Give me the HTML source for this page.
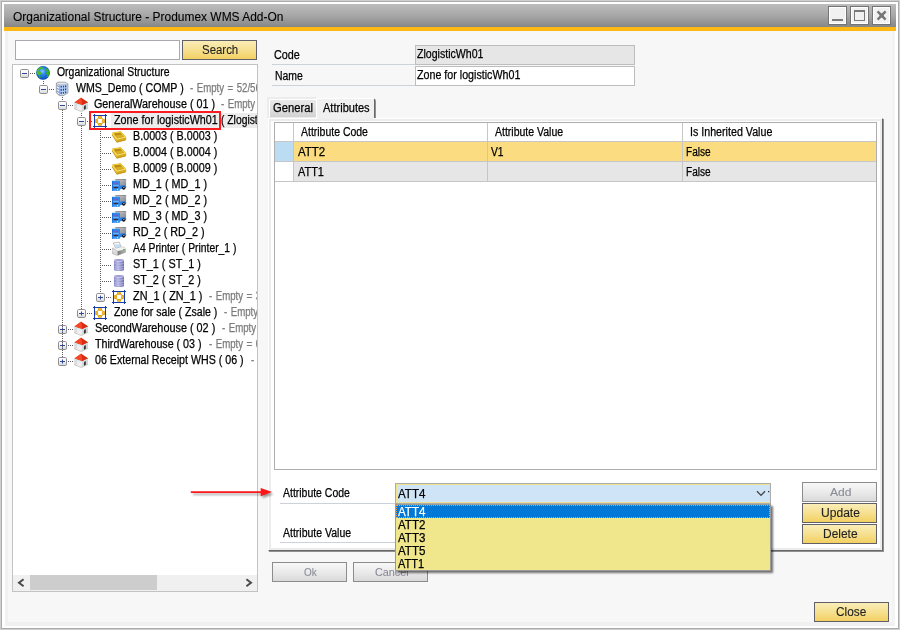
<!DOCTYPE html>
<html><head><meta charset="utf-8"><title>Organizational Structure - Produmex WMS Add-On</title>
<style>
html,body{margin:0;padding:0}
body{width:900px;height:630px;overflow:hidden;position:relative;background:#cfcfcf;font-family:'Liberation Sans', sans-serif;font-size:11px}
span{-webkit-text-stroke:0.25px currentColor}
span.u{-webkit-text-stroke:0.1px currentColor}
</style></head><body>
<div style="position:absolute;left:1px;top:1px;width:898px;height:628px;background:#acacac"></div>
<div style="position:absolute;left:2px;top:2px;width:896px;height:626px;background:#fff"></div>
<div style="position:absolute;left:4px;top:4px;width:892px;height:23px;background:linear-gradient(#bdbdbd,#a7a7a7 50%,#868686)"></div>
<div style="position:absolute;left:4px;top:27px;width:892px;height:4px;background:#fdb813"></div>
<div style="position:absolute;left:5px;top:31px;width:890px;height:595px;background:#f7f7f7;box-sizing:border-box;border-left:3px solid #f1f1f1;border-right:3px solid #f3f3f3;border-bottom:4px solid #f0f0f0"></div>
<div style="position:absolute;left:828px;top:6px;width:19px;height:19px;box-sizing:border-box;border:1px solid #747474;background:#f1f1f1;box-shadow:inset 0 0 0 1px #fff"></div>
<div style="position:absolute;left:850px;top:6px;width:19px;height:19px;box-sizing:border-box;border:1px solid #747474;background:#f1f1f1;box-shadow:inset 0 0 0 1px #fff"></div>
<div style="position:absolute;left:872px;top:6px;width:19px;height:19px;box-sizing:border-box;border:1px solid #747474;background:#f1f1f1;box-shadow:inset 0 0 0 1px #fff"></div>
<div style="position:absolute;left:832px;top:19px;width:11px;height:2px;background:#7a7a7a"></div>
<div style="position:absolute;left:854px;top:10px;width:11px;height:11px;box-sizing:border-box;border:1px solid #7a7a7a;border-top-width:2px"></div>
<svg style="position:absolute;left:872px;top:6px" width="19" height="19" viewBox="0 0 19 19"><path d="M5.6 5.4 L13.6 13.6 M13.6 5.4 L5.6 13.6" stroke="#767676" stroke-width="2.4" fill="none"/><rect x="7.6" y="7.5" width="4" height="4" fill="#767676"/></svg>
<div style="position:absolute;left:15px;top:40px;width:165px;height:20px;box-sizing:border-box;border:1px solid #a7abaf;background:#fff"></div>
<div style="position:absolute;left:182px;top:40px;width:75px;height:20px;box-sizing:border-box;border:1px solid #606066;background:linear-gradient(#faedb8,#f6e090 50%,#f2d062);"></div>
<div style="position:absolute;left:12px;top:64px;width:246px;height:528px;box-sizing:border-box;border:1px solid #c3c3c3;background:#fff"></div>
<div style="position:absolute;left:272px;top:64px;width:143px;height:1px;background:#cbd2da"></div>
<div style="position:absolute;left:272px;top:85px;width:143px;height:1px;background:#cbd2da"></div>
<div style="position:absolute;left:415px;top:45px;width:220px;height:20px;box-sizing:border-box;border:1px solid #bdbdbd;background:#e6e6e6"></div>
<div style="position:absolute;left:415px;top:66px;width:220px;height:20px;box-sizing:border-box;border:1px solid #bdbdbd;background:#fff"></div>
<div style="position:absolute;left:267px;top:97px;width:50px;height:21px;background:#ececec"></div>
<div style="position:absolute;left:269px;top:99px;width:47px;height:18px;background:linear-gradient(#e8e8e8,#e0e0e0 50%,#d2d2d2);box-sizing:border-box;border-left:1px solid #fff;border-top:1px solid #fff;border-top-left-radius:2px"></div>
<div style="position:absolute;left:316px;top:98px;width:59px;height:21px;background:#f0f0f0;box-sizing:border-box;border-top:1px solid #fff;border-left:1px solid #fff;border-right:1px solid #696969;box-shadow:1px 1px 0 #8f8f8f;border-top-right-radius:2px"></div>
<div style="position:absolute;left:268px;top:118px;width:615px;height:433px;box-sizing:border-box;background:#ececec;border-top:1px solid #fff;border-left:1px solid #fff;border-right:1px solid #696969;border-bottom:1px solid #696969;box-shadow:1px 1px 0 #8f8f8f"></div>
<div style="position:absolute;left:271px;top:121px;width:609px;height:427px;background:#fff"></div>
<div style="position:absolute;left:317px;top:118px;width:57px;height:1px;background:#f0f0f0"></div>
<div style="position:absolute;left:274px;top:122px;width:603px;height:348px;box-sizing:border-box;border:1px solid #aeaeae;background:#fff"></div>
<div style="position:absolute;left:275px;top:141px;width:601px;height:1px;background:#c6c6c6"></div>
<div style="position:absolute;left:293px;top:123px;width:1px;height:59px;background:#c6c6c6"></div>
<div style="position:absolute;left:487px;top:123px;width:1px;height:59px;background:#c6c6c6"></div>
<div style="position:absolute;left:682px;top:123px;width:1px;height:59px;background:#c6c6c6"></div>
<div style="position:absolute;left:275px;top:142px;width:18px;height:19px;background:#bcdcf4"></div>
<div style="position:absolute;left:294px;top:142px;width:193px;height:19px;background:#fbdc80"></div>
<div style="position:absolute;left:488px;top:142px;width:194px;height:19px;background:#fbdc80"></div>
<div style="position:absolute;left:683px;top:142px;width:193px;height:19px;background:#fbdc80"></div>
<div style="position:absolute;left:275px;top:161px;width:601px;height:1px;background:#c6c6c6"></div>
<div style="position:absolute;left:294px;top:162px;width:193px;height:19px;background:#e6e6e6"></div>
<div style="position:absolute;left:488px;top:162px;width:194px;height:19px;background:#e6e6e6"></div>
<div style="position:absolute;left:683px;top:162px;width:193px;height:19px;background:#e6e6e6"></div>
<div style="position:absolute;left:275px;top:181px;width:601px;height:1px;background:#c6c6c6"></div>
<div style="position:absolute;left:280px;top:503px;width:116px;height:1px;background:#cbd2da"></div>
<div style="position:absolute;left:280px;top:542px;width:116px;height:1px;background:#cbd2da"></div>
<div style="position:absolute;left:395px;top:483px;width:376px;height:21px;box-sizing:border-box;border:1px solid #adadad;background:#cfe4f7;box-shadow:inset 0 0 0 1px #efe28c"></div>
<svg style="position:absolute;left:755px;top:489px" width="16" height="10" viewBox="0 0 16 10"><path d="M2 2.2 L6 6.4 L10 2.2" fill="none" stroke="#444" stroke-width="1.3"/><rect x="13" y="2" width="1.2" height="1.2" fill="#222"/></svg>
<div style="position:absolute;left:802px;top:482px;width:75px;height:20px;box-sizing:border-box;border:1px solid #8c8c8c;background:linear-gradient(#f8f8f8,#e9e9e9 55%,#d9d9d9);"></div>
<div style="position:absolute;left:802px;top:503px;width:75px;height:20px;box-sizing:border-box;border:1px solid #606066;background:linear-gradient(#faedb8,#f6e090 50%,#f2d062);"></div>
<div style="position:absolute;left:802px;top:524px;width:75px;height:20px;box-sizing:border-box;border:1px solid #606066;background:linear-gradient(#faedb8,#f6e090 50%,#f2d062);"></div>
<div style="position:absolute;left:272px;top:562px;width:75px;height:20px;box-sizing:border-box;border:1px solid #8c8c8c;background:linear-gradient(#f8f8f8,#e9e9e9 55%,#d9d9d9);"></div>
<div style="position:absolute;left:353px;top:562px;width:75px;height:20px;box-sizing:border-box;border:1px solid #8c8c8c;background:linear-gradient(#f8f8f8,#e9e9e9 55%,#d9d9d9);"></div>
<div style="position:absolute;left:814px;top:602px;width:75px;height:20px;box-sizing:border-box;border:1px solid #606066;background:linear-gradient(#faedb8,#f6e090 50%,#f2d062);"></div>
<svg style="position:absolute;left:186px;top:484px" width="90" height="18" viewBox="0 0 90 18"><defs><filter id="sh" x="-10%" y="-50%" width="120%" height="250%"><feGaussianBlur stdDeviation="0.9"/></filter></defs><g filter="url(#sh)" opacity="0.5"><path d="M7 10.2H76" stroke="#333" stroke-width="1.4"/><path d="M76.5 6.6 L87.5 10.2 L76.5 14Z" fill="#333"/></g><path d="M4.8 8.1H75.5" stroke="#ff1418" stroke-width="1.7"/><path d="M74.7 4.1 L86 8.1 L74.7 12.2Z" fill="#ff1418"/></svg>
<div style="position:absolute;left:13px;top:65px;width:244px;height:526px;overflow:hidden">
<div style="position:absolute;left:98px;top:48px;width:146px;height:15px;background:#ececec"></div>
<svg style="position:absolute;left:7px;top:4px" width="9" height="9" viewBox="0 0 9 9"><defs><linearGradient id="g1" x1="0" x2="0" y1="0" y2="1"><stop offset="0" stop-color="#ffffff"/><stop offset="0.5" stop-color="#f4f4f4"/><stop offset="1" stop-color="#d4d4d4"/></linearGradient></defs>
<rect x="0.5" y="0.5" width="8" height="8" rx="1.2" fill="url(#g1)" stroke="#8f8f8f"/>
<path d="M2 4.5H7" stroke="#2f469f" stroke-width="1"/></svg>
<div style="position:absolute;left:17px;top:8px;width:6px;height:1px;background:repeating-linear-gradient(90deg,#5a5a5a 0 1px,transparent 1px 2px)"></div>
<svg style="position:absolute;left:23px;top:0px" width="16" height="16" viewBox="0 0 16 16"><defs><radialGradient id="g2" cx="0.45" cy="0.38" r="0.62"><stop offset="0" stop-color="#8cc4ff"/><stop offset="0.4" stop-color="#2a86f0"/><stop offset="1" stop-color="#0a4cc0"/></radialGradient><clipPath id="g2c"><circle cx="7" cy="7.85" r="6.8"/></clipPath></defs>
<circle cx="7" cy="7.85" r="6.8" fill="url(#g2)"/>
<g clip-path="url(#g2c)"><path d="M1.2 4.5 L3 2.5 L5 1.8 L6.8 2.6 L6.6 4.6 L5 4 L3.8 4.6 L3.4 6 L2.4 6.6 L4.8 6.8 L5 9 L3.8 10.4 L2.2 10 L0.6 8.6 L0.2 6.5Z" fill="#46c024"/>
<path d="M2.2 11 L4.5 11.4 L5 12.6 L3.8 13.4Z" fill="#2fa61c"/>
<path d="M9.5 4 L11 3.2 L12.8 5 L13.8 7.5 L13.4 10 L12 12.2 L10.8 11.8 L11.5 10 L10.2 9.2 L10.2 7.4 L11.2 6.4 L10 5.4Z" fill="#35b020"/>
<path d="M2.4 5.2 L3.2 5 L3.2 6 L2.4 6.2Z" fill="#3a90f0"/></g>
<circle cx="7" cy="7.85" r="6.6" fill="none" stroke="#0b3f9c" stroke-opacity="0.35" stroke-width="0.6"/></svg>
<svg style="position:absolute;left:26px;top:20px" width="9" height="9" viewBox="0 0 9 9"><defs><linearGradient id="g3" x1="0" x2="0" y1="0" y2="1"><stop offset="0" stop-color="#ffffff"/><stop offset="0.5" stop-color="#f4f4f4"/><stop offset="1" stop-color="#d4d4d4"/></linearGradient></defs>
<rect x="0.5" y="0.5" width="8" height="8" rx="1.2" fill="url(#g3)" stroke="#8f8f8f"/>
<path d="M2 4.5H7" stroke="#2f469f" stroke-width="1"/></svg>
<div style="position:absolute;left:36px;top:24px;width:6px;height:1px;background:repeating-linear-gradient(90deg,#5a5a5a 0 1px,transparent 1px 2px)"></div>
<svg style="position:absolute;left:42px;top:16px" width="16" height="16" viewBox="0 0 16 16"><path d="M1.2 2.3 L3.4 1 L10 1 L13.1 2.9 L13.1 12 L8 14.9 L4 14.6 L1.2 11.7Z" fill="#888b90" stroke="#8c8f94" stroke-width="0.4"/>
<path d="M1.8 2.5 L3.6 1.5 L9.8 1.5 L12.5 3 L4.6 3.8Z" fill="#e9ebee"/>
<path d="M1.8 3 L4.3 3.9 L4.3 13.9 L1.8 11.4Z" fill="#eef0f4"/>
<path d="M4.9 3.9 L12.5 3.3 L12.5 11.7 L8 14.2 L4.9 13.9Z" fill="#dfe4ec"/>
<g fill="#0b3cc4"><rect x="5.4" y="4.6" width="1.5" height="2.2" rx="0.5"/><rect x="7.8" y="4.4" width="1.2" height="2.2" rx="0.5"/><rect x="9.9" y="4.2" width="1.5" height="2.2" rx="0.5"/>
<rect x="5.4" y="7.8" width="1.5" height="2.1" rx="0.5"/><rect x="7.8" y="7.6" width="1.2" height="2.1" rx="0.5"/><rect x="9.9" y="7.3" width="1.5" height="2.1" rx="0.5"/>
<rect x="5.4" y="10.9" width="1.5" height="2" rx="0.5"/><rect x="7.8" y="10.7" width="1.2" height="2" rx="0.5"/><rect x="9.9" y="10.3" width="1.5" height="2" rx="0.5"/></g>
<g fill="none" stroke="#9cc0f2" stroke-width="0.5"><rect x="5.15" y="4.35" width="2" height="2.7"/><rect x="9.65" y="3.95" width="2" height="2.7"/><rect x="5.15" y="7.55" width="2" height="2.6"/><rect x="9.65" y="7.05" width="2" height="2.6"/><rect x="5.15" y="10.65" width="2" height="2.5"/><rect x="9.65" y="10.05" width="2" height="2.5"/></g>
<g stroke="#6f9de6" stroke-width="1.1" fill="none"><path d="M1.9 4.4 L4.1 5.7M1.9 7.2 L4.1 8.6M1.9 10 L4.1 11.5"/></g></svg>
<svg style="position:absolute;left:45px;top:36px" width="9" height="9" viewBox="0 0 9 9"><defs><linearGradient id="g4" x1="0" x2="0" y1="0" y2="1"><stop offset="0" stop-color="#ffffff"/><stop offset="0.5" stop-color="#f4f4f4"/><stop offset="1" stop-color="#d4d4d4"/></linearGradient></defs>
<rect x="0.5" y="0.5" width="8" height="8" rx="1.2" fill="url(#g4)" stroke="#8f8f8f"/>
<path d="M2 4.5H7" stroke="#2f469f" stroke-width="1"/></svg>
<div style="position:absolute;left:55px;top:40px;width:6px;height:1px;background:repeating-linear-gradient(90deg,#5a5a5a 0 1px,transparent 1px 2px)"></div>
<svg style="position:absolute;left:61px;top:32px" width="16" height="16" viewBox="0 0 16 16"><path d="M0.3 6 L8.2 8.6 L7.4 14.6 L0.3 11.8Z" fill="#efefef"/>
<path d="M0.3 6 L3 7 L3 12.8 L0.3 11.8Z" fill="#dcdcdc"/>
<path d="M8.2 8.6 L14 5.8 L14 11.3 L7.4 14.6Z" fill="#d4d6d9"/>
<path d="M10 9.2 Q10.9 8 11.8 8.4 L11.8 12 L10 12.8Z" fill="#303030"/>
<path d="M7 0.7 L0.4 5.6 L8.3 8.2 L14.1 5.4Z" fill="#e8391c"/>
<path d="M7 0.7 L14.1 5.4 L8.3 8.2Z" fill="#dc2d12"/>
<path d="M7 0.7 L0.4 5.6 L8.3 8.2Z" fill="#f4482a"/>
<path d="M0.4 6.2 L8.3 8.8 L14 6" fill="none" stroke="#c2eef4" stroke-width="0.9"/>
<path d="M0.3 11.8 L7.4 14.6 L14 11.3" fill="none" stroke="#b4b4b4" stroke-width="0.6"/></svg>
<svg style="position:absolute;left:64px;top:52px" width="9" height="9" viewBox="0 0 9 9"><defs><linearGradient id="g5" x1="0" x2="0" y1="0" y2="1"><stop offset="0" stop-color="#ffffff"/><stop offset="0.5" stop-color="#f4f4f4"/><stop offset="1" stop-color="#d4d4d4"/></linearGradient></defs>
<rect x="0.5" y="0.5" width="8" height="8" rx="1.2" fill="url(#g5)" stroke="#8f8f8f"/>
<path d="M2 4.5H7" stroke="#2f469f" stroke-width="1"/></svg>
<div style="position:absolute;left:74px;top:56px;width:6px;height:1px;background:repeating-linear-gradient(90deg,#5a5a5a 0 1px,transparent 1px 2px)"></div>
<svg style="position:absolute;left:80px;top:48px" width="16" height="16" viewBox="0 0 16 16"><g fill="#1a3cae"><rect x="1" y="1" width="1" height="14"/><rect x="12" y="1" width="1" height="14"/><rect x="0" y="2" width="14" height="1"/><rect x="0" y="13" width="14" height="1"/></g>
<g fill="#dfa30c"><rect x="5" y="3" width="4" height="2.8" rx="1"/><rect x="5" y="10" width="4" height="2.8" rx="1"/><rect x="2" y="5.9" width="2.9" height="4" rx="1"/><rect x="9.1" y="5.9" width="2.9" height="4" rx="1"/>
<rect x="4.2" y="5.1" width="1.2" height="1.2"/><rect x="8.6" y="5.1" width="1.2" height="1.2"/><rect x="4.2" y="9.5" width="1.2" height="1.2"/><rect x="8.6" y="9.5" width="1.2" height="1.2"/></g>
<g fill="#f4c93a"><rect x="5.8" y="3.3" width="2" height="1.2" rx="0.5"/><rect x="2.4" y="6.6" width="1.2" height="2" rx="0.5"/><rect x="10" y="6.8" width="1.2" height="2" rx="0.5"/><rect x="6" y="11" width="2" height="1.1" rx="0.5"/></g></svg>
<div style="position:absolute;left:89px;top:72px;width:10px;height:1px;background:repeating-linear-gradient(90deg,#5a5a5a 0 1px,transparent 1px 2px)"></div>
<svg style="position:absolute;left:99px;top:64px" width="16" height="16" viewBox="0 0 16 16"><path d="M0 3.9 L8.8 2.5 L13.9 8.2 L13.6 10.9 L4.9 13.2 L0.3 6Z" fill="#c9981a" stroke="#c09012" stroke-width="0.5"/>
<path d="M0 3.9 L8.8 2.5 L13.9 8.2 L4.9 10.3Z" fill="#f8da3e"/>
<path d="M1.5 4.6 L8.3 3.5 L12.1 7.9 L5.3 9.4Z" fill="#b98c14"/>
<path d="M3 6.6 L10 5.5 L12.1 7.9 L5.3 9.4Z" fill="#d9ac26"/>
<path d="M4.9 10.3 L13.9 8.2 L13.6 10.9 L4.9 13.2Z" fill="#d8a81c"/>
<path d="M0 3.9 L4.9 10.3 L4.9 13.2 L0.3 6Z" fill="#ecc430"/>
<path d="M0.2 4 L4.9 10.2 L13.8 8.2" fill="none" stroke="#fdec80" stroke-width="0.8"/>
<path d="M0.3 6.2 L4.9 13.2 L13.6 10.9" fill="none" stroke="#b8880e" stroke-width="0.5"/></svg>
<div style="position:absolute;left:89px;top:88px;width:10px;height:1px;background:repeating-linear-gradient(90deg,#5a5a5a 0 1px,transparent 1px 2px)"></div>
<svg style="position:absolute;left:99px;top:80px" width="16" height="16" viewBox="0 0 16 16"><path d="M0 3.9 L8.8 2.5 L13.9 8.2 L13.6 10.9 L4.9 13.2 L0.3 6Z" fill="#c9981a" stroke="#c09012" stroke-width="0.5"/>
<path d="M0 3.9 L8.8 2.5 L13.9 8.2 L4.9 10.3Z" fill="#f8da3e"/>
<path d="M1.5 4.6 L8.3 3.5 L12.1 7.9 L5.3 9.4Z" fill="#b98c14"/>
<path d="M3 6.6 L10 5.5 L12.1 7.9 L5.3 9.4Z" fill="#d9ac26"/>
<path d="M4.9 10.3 L13.9 8.2 L13.6 10.9 L4.9 13.2Z" fill="#d8a81c"/>
<path d="M0 3.9 L4.9 10.3 L4.9 13.2 L0.3 6Z" fill="#ecc430"/>
<path d="M0.2 4 L4.9 10.2 L13.8 8.2" fill="none" stroke="#fdec80" stroke-width="0.8"/>
<path d="M0.3 6.2 L4.9 13.2 L13.6 10.9" fill="none" stroke="#b8880e" stroke-width="0.5"/></svg>
<div style="position:absolute;left:89px;top:104px;width:10px;height:1px;background:repeating-linear-gradient(90deg,#5a5a5a 0 1px,transparent 1px 2px)"></div>
<svg style="position:absolute;left:99px;top:96px" width="16" height="16" viewBox="0 0 16 16"><path d="M0 3.9 L8.8 2.5 L13.9 8.2 L13.6 10.9 L4.9 13.2 L0.3 6Z" fill="#c9981a" stroke="#c09012" stroke-width="0.5"/>
<path d="M0 3.9 L8.8 2.5 L13.9 8.2 L4.9 10.3Z" fill="#f8da3e"/>
<path d="M1.5 4.6 L8.3 3.5 L12.1 7.9 L5.3 9.4Z" fill="#b98c14"/>
<path d="M3 6.6 L10 5.5 L12.1 7.9 L5.3 9.4Z" fill="#d9ac26"/>
<path d="M4.9 10.3 L13.9 8.2 L13.6 10.9 L4.9 13.2Z" fill="#d8a81c"/>
<path d="M0 3.9 L4.9 10.3 L4.9 13.2 L0.3 6Z" fill="#ecc430"/>
<path d="M0.2 4 L4.9 10.2 L13.8 8.2" fill="none" stroke="#fdec80" stroke-width="0.8"/>
<path d="M0.3 6.2 L4.9 13.2 L13.6 10.9" fill="none" stroke="#b8880e" stroke-width="0.5"/></svg>
<div style="position:absolute;left:89px;top:120px;width:10px;height:1px;background:repeating-linear-gradient(90deg,#5a5a5a 0 1px,transparent 1px 2px)"></div>
<svg style="position:absolute;left:99px;top:112px" width="16" height="16" viewBox="0 0 16 16"><defs><linearGradient id="g6" x1="0" x2="1" y1="0" y2="1"><stop offset="0" stop-color="#d2d2d2"/><stop offset="1" stop-color="#828282"/></linearGradient></defs>
<rect x="3.3" y="2" width="10.8" height="8" fill="url(#g6)"/>
<rect x="3.3" y="2" width="10.8" height="0.8" fill="#8a8a8a"/>
<path d="M8 8.7 Q11 7.8 14.1 8.9 L14.1 11.2 L8 12.2Z" fill="#2583ee"/>
<circle cx="11.7" cy="11" r="1.7" fill="#161616"/><circle cx="11.9" cy="10.6" r="0.6" fill="#f2f2f2"/>
<rect x="0" y="3.8" width="8.1" height="10" rx="1" fill="#2a8af4"/>
<rect x="0" y="3.8" width="1" height="10" rx="0.5" fill="#1a6fdc"/>
<rect x="1.2" y="5.7" width="5" height="2" fill="#6f62b8"/>
<rect x="1.2" y="7.8" width="5.4" height="1.6" fill="#62b4ff"/>
<path d="M1.3 9.8 L6.2 9.8 L5.6 11.3 L1.7 11.3Z" fill="#3a2a20"/>
<rect x="0.8" y="11.6" width="6.6" height="1.6" fill="#3d96f6"/>
<circle cx="5.6" cy="12.5" r="0.55" fill="#fff"/></svg>
<div style="position:absolute;left:89px;top:136px;width:10px;height:1px;background:repeating-linear-gradient(90deg,#5a5a5a 0 1px,transparent 1px 2px)"></div>
<svg style="position:absolute;left:99px;top:128px" width="16" height="16" viewBox="0 0 16 16"><defs><linearGradient id="g7" x1="0" x2="1" y1="0" y2="1"><stop offset="0" stop-color="#d2d2d2"/><stop offset="1" stop-color="#828282"/></linearGradient></defs>
<rect x="3.3" y="2" width="10.8" height="8" fill="url(#g7)"/>
<rect x="3.3" y="2" width="10.8" height="0.8" fill="#8a8a8a"/>
<path d="M8 8.7 Q11 7.8 14.1 8.9 L14.1 11.2 L8 12.2Z" fill="#2583ee"/>
<circle cx="11.7" cy="11" r="1.7" fill="#161616"/><circle cx="11.9" cy="10.6" r="0.6" fill="#f2f2f2"/>
<rect x="0" y="3.8" width="8.1" height="10" rx="1" fill="#2a8af4"/>
<rect x="0" y="3.8" width="1" height="10" rx="0.5" fill="#1a6fdc"/>
<rect x="1.2" y="5.7" width="5" height="2" fill="#6f62b8"/>
<rect x="1.2" y="7.8" width="5.4" height="1.6" fill="#62b4ff"/>
<path d="M1.3 9.8 L6.2 9.8 L5.6 11.3 L1.7 11.3Z" fill="#3a2a20"/>
<rect x="0.8" y="11.6" width="6.6" height="1.6" fill="#3d96f6"/>
<circle cx="5.6" cy="12.5" r="0.55" fill="#fff"/></svg>
<div style="position:absolute;left:89px;top:152px;width:10px;height:1px;background:repeating-linear-gradient(90deg,#5a5a5a 0 1px,transparent 1px 2px)"></div>
<svg style="position:absolute;left:99px;top:144px" width="16" height="16" viewBox="0 0 16 16"><defs><linearGradient id="g8" x1="0" x2="1" y1="0" y2="1"><stop offset="0" stop-color="#d2d2d2"/><stop offset="1" stop-color="#828282"/></linearGradient></defs>
<rect x="3.3" y="2" width="10.8" height="8" fill="url(#g8)"/>
<rect x="3.3" y="2" width="10.8" height="0.8" fill="#8a8a8a"/>
<path d="M8 8.7 Q11 7.8 14.1 8.9 L14.1 11.2 L8 12.2Z" fill="#2583ee"/>
<circle cx="11.7" cy="11" r="1.7" fill="#161616"/><circle cx="11.9" cy="10.6" r="0.6" fill="#f2f2f2"/>
<rect x="0" y="3.8" width="8.1" height="10" rx="1" fill="#2a8af4"/>
<rect x="0" y="3.8" width="1" height="10" rx="0.5" fill="#1a6fdc"/>
<rect x="1.2" y="5.7" width="5" height="2" fill="#6f62b8"/>
<rect x="1.2" y="7.8" width="5.4" height="1.6" fill="#62b4ff"/>
<path d="M1.3 9.8 L6.2 9.8 L5.6 11.3 L1.7 11.3Z" fill="#3a2a20"/>
<rect x="0.8" y="11.6" width="6.6" height="1.6" fill="#3d96f6"/>
<circle cx="5.6" cy="12.5" r="0.55" fill="#fff"/></svg>
<div style="position:absolute;left:89px;top:168px;width:10px;height:1px;background:repeating-linear-gradient(90deg,#5a5a5a 0 1px,transparent 1px 2px)"></div>
<svg style="position:absolute;left:99px;top:160px" width="16" height="16" viewBox="0 0 16 16"><defs><linearGradient id="g9" x1="0" x2="1" y1="0" y2="1"><stop offset="0" stop-color="#d2d2d2"/><stop offset="1" stop-color="#828282"/></linearGradient></defs>
<rect x="3.3" y="2" width="10.8" height="8" fill="url(#g9)"/>
<rect x="3.3" y="2" width="10.8" height="0.8" fill="#8a8a8a"/>
<path d="M8 8.7 Q11 7.8 14.1 8.9 L14.1 11.2 L8 12.2Z" fill="#2583ee"/>
<circle cx="11.7" cy="11" r="1.7" fill="#161616"/><circle cx="11.9" cy="10.6" r="0.6" fill="#f2f2f2"/>
<rect x="0" y="3.8" width="8.1" height="10" rx="1" fill="#2a8af4"/>
<rect x="0" y="3.8" width="1" height="10" rx="0.5" fill="#1a6fdc"/>
<rect x="1.2" y="5.7" width="5" height="2" fill="#6f62b8"/>
<rect x="1.2" y="7.8" width="5.4" height="1.6" fill="#62b4ff"/>
<path d="M1.3 9.8 L6.2 9.8 L5.6 11.3 L1.7 11.3Z" fill="#3a2a20"/>
<rect x="0.8" y="11.6" width="6.6" height="1.6" fill="#3d96f6"/>
<circle cx="5.6" cy="12.5" r="0.55" fill="#fff"/></svg>
<div style="position:absolute;left:89px;top:184px;width:10px;height:1px;background:repeating-linear-gradient(90deg,#5a5a5a 0 1px,transparent 1px 2px)"></div>
<svg style="position:absolute;left:99px;top:176px" width="16" height="16" viewBox="0 0 16 16"><defs><linearGradient id="g10" x1="0" x2="1" y1="0" y2="0"><stop offset="0" stop-color="#7c7c7c"/><stop offset="1" stop-color="#b8b8b8"/></linearGradient></defs>
<path d="M1.2 2 L7.3 1.2 L9 5.8 L4 7.3Z" fill="#fdfdfd" stroke="#a2a2a2" stroke-width="0.7"/>
<path d="M2.6 3.6 L7.6 2.9 L8.6 5.7 L4.1 7Z" fill="#bfe0fb"/>
<path d="M0.3 7.4 L4 6.6 L4.3 7.2 L8.8 5.9 L12.2 6.2 L14 8.3 L5.6 10.3Z" fill="#f4f4f4" stroke="#b4b4b4" stroke-width="0.5"/>
<path d="M0.3 7.4 L5.6 10.3 L5.8 14.5 L0.3 12.7Z" fill="#e2e2e2" stroke="#a8a8a8" stroke-width="0.5"/>
<path d="M5.6 10.3 L14 8.3 L14 11.4 L5.8 14.5Z" fill="url(#g10)"/>
<path d="M0.9 11 L5.1 12.8 L5.1 13.9 L0.9 12.3Z" fill="#ffffff" stroke="#9c9c9c" stroke-width="0.4"/>
<path d="M11 8.3 L12.9 7.9 L13 8.8 L11.1 9.2Z" fill="#2fc41e"/></svg>
<div style="position:absolute;left:89px;top:200px;width:10px;height:1px;background:repeating-linear-gradient(90deg,#5a5a5a 0 1px,transparent 1px 2px)"></div>
<svg style="position:absolute;left:99px;top:192px" width="16" height="16" viewBox="0 0 16 16"><defs><linearGradient id="g11" x1="0" x2="1" y1="0" y2="0"><stop offset="0" stop-color="#8484c4"/><stop offset="0.4" stop-color="#b6b6e6"/><stop offset="1" stop-color="#6c6cb0"/></linearGradient></defs>
<path d="M2 3.2 V12.4 A5 1.6 0 0 0 12 12.4 V3.2Z" fill="url(#g11)"/>
<ellipse cx="7" cy="3.2" rx="5" ry="1.2" fill="#9c9cd4"/>
<path d="M2.2 3.5 A4.9 1.2 0 0 0 11.8 3.5" fill="none" stroke="#dedef6" stroke-width="0.7"/>
<path d="M2.4 6.3 A4.8 1.2 0 0 0 11.6 6.3M2.4 9.2 A4.8 1.2 0 0 0 11.6 9.2M2.4 11.4 A4.8 1.2 0 0 0 11.6 11.4" fill="none" stroke="#d4d4f2" stroke-width="0.6" opacity="0.9"/></svg>
<div style="position:absolute;left:89px;top:216px;width:10px;height:1px;background:repeating-linear-gradient(90deg,#5a5a5a 0 1px,transparent 1px 2px)"></div>
<svg style="position:absolute;left:99px;top:208px" width="16" height="16" viewBox="0 0 16 16"><defs><linearGradient id="g12" x1="0" x2="1" y1="0" y2="0"><stop offset="0" stop-color="#8484c4"/><stop offset="0.4" stop-color="#b6b6e6"/><stop offset="1" stop-color="#6c6cb0"/></linearGradient></defs>
<path d="M2 3.2 V12.4 A5 1.6 0 0 0 12 12.4 V3.2Z" fill="url(#g12)"/>
<ellipse cx="7" cy="3.2" rx="5" ry="1.2" fill="#9c9cd4"/>
<path d="M2.2 3.5 A4.9 1.2 0 0 0 11.8 3.5" fill="none" stroke="#dedef6" stroke-width="0.7"/>
<path d="M2.4 6.3 A4.8 1.2 0 0 0 11.6 6.3M2.4 9.2 A4.8 1.2 0 0 0 11.6 9.2M2.4 11.4 A4.8 1.2 0 0 0 11.6 11.4" fill="none" stroke="#d4d4f2" stroke-width="0.6" opacity="0.9"/></svg>
<svg style="position:absolute;left:83px;top:228px" width="9" height="9" viewBox="0 0 9 9"><defs><linearGradient id="g13" x1="0" x2="0" y1="0" y2="1"><stop offset="0" stop-color="#ffffff"/><stop offset="0.5" stop-color="#f4f4f4"/><stop offset="1" stop-color="#d4d4d4"/></linearGradient></defs>
<rect x="0.5" y="0.5" width="8" height="8" rx="1.2" fill="url(#g13)" stroke="#8f8f8f"/>
<path d="M2 4.5H7" stroke="#2f469f" stroke-width="1"/><path d="M4.5 2.5V6.5" stroke="#2f469f" stroke-width="1"/></svg>
<div style="position:absolute;left:93px;top:232px;width:6px;height:1px;background:repeating-linear-gradient(90deg,#5a5a5a 0 1px,transparent 1px 2px)"></div>
<svg style="position:absolute;left:99px;top:224px" width="16" height="16" viewBox="0 0 16 16"><g fill="#1a3cae"><rect x="1" y="1" width="1" height="14"/><rect x="12" y="1" width="1" height="14"/><rect x="0" y="2" width="14" height="1"/><rect x="0" y="13" width="14" height="1"/></g>
<g fill="#dfa30c"><rect x="5" y="3" width="4" height="2.8" rx="1"/><rect x="5" y="10" width="4" height="2.8" rx="1"/><rect x="2" y="5.9" width="2.9" height="4" rx="1"/><rect x="9.1" y="5.9" width="2.9" height="4" rx="1"/>
<rect x="4.2" y="5.1" width="1.2" height="1.2"/><rect x="8.6" y="5.1" width="1.2" height="1.2"/><rect x="4.2" y="9.5" width="1.2" height="1.2"/><rect x="8.6" y="9.5" width="1.2" height="1.2"/></g>
<g fill="#f4c93a"><rect x="5.8" y="3.3" width="2" height="1.2" rx="0.5"/><rect x="2.4" y="6.6" width="1.2" height="2" rx="0.5"/><rect x="10" y="6.8" width="1.2" height="2" rx="0.5"/><rect x="6" y="11" width="2" height="1.1" rx="0.5"/></g></svg>
<svg style="position:absolute;left:64px;top:244px" width="9" height="9" viewBox="0 0 9 9"><defs><linearGradient id="g14" x1="0" x2="0" y1="0" y2="1"><stop offset="0" stop-color="#ffffff"/><stop offset="0.5" stop-color="#f4f4f4"/><stop offset="1" stop-color="#d4d4d4"/></linearGradient></defs>
<rect x="0.5" y="0.5" width="8" height="8" rx="1.2" fill="url(#g14)" stroke="#8f8f8f"/>
<path d="M2 4.5H7" stroke="#2f469f" stroke-width="1"/><path d="M4.5 2.5V6.5" stroke="#2f469f" stroke-width="1"/></svg>
<div style="position:absolute;left:74px;top:248px;width:6px;height:1px;background:repeating-linear-gradient(90deg,#5a5a5a 0 1px,transparent 1px 2px)"></div>
<svg style="position:absolute;left:80px;top:240px" width="16" height="16" viewBox="0 0 16 16"><g fill="#1a3cae"><rect x="1" y="1" width="1" height="14"/><rect x="12" y="1" width="1" height="14"/><rect x="0" y="2" width="14" height="1"/><rect x="0" y="13" width="14" height="1"/></g>
<g fill="#dfa30c"><rect x="5" y="3" width="4" height="2.8" rx="1"/><rect x="5" y="10" width="4" height="2.8" rx="1"/><rect x="2" y="5.9" width="2.9" height="4" rx="1"/><rect x="9.1" y="5.9" width="2.9" height="4" rx="1"/>
<rect x="4.2" y="5.1" width="1.2" height="1.2"/><rect x="8.6" y="5.1" width="1.2" height="1.2"/><rect x="4.2" y="9.5" width="1.2" height="1.2"/><rect x="8.6" y="9.5" width="1.2" height="1.2"/></g>
<g fill="#f4c93a"><rect x="5.8" y="3.3" width="2" height="1.2" rx="0.5"/><rect x="2.4" y="6.6" width="1.2" height="2" rx="0.5"/><rect x="10" y="6.8" width="1.2" height="2" rx="0.5"/><rect x="6" y="11" width="2" height="1.1" rx="0.5"/></g></svg>
<svg style="position:absolute;left:45px;top:260px" width="9" height="9" viewBox="0 0 9 9"><defs><linearGradient id="g15" x1="0" x2="0" y1="0" y2="1"><stop offset="0" stop-color="#ffffff"/><stop offset="0.5" stop-color="#f4f4f4"/><stop offset="1" stop-color="#d4d4d4"/></linearGradient></defs>
<rect x="0.5" y="0.5" width="8" height="8" rx="1.2" fill="url(#g15)" stroke="#8f8f8f"/>
<path d="M2 4.5H7" stroke="#2f469f" stroke-width="1"/><path d="M4.5 2.5V6.5" stroke="#2f469f" stroke-width="1"/></svg>
<div style="position:absolute;left:55px;top:264px;width:6px;height:1px;background:repeating-linear-gradient(90deg,#5a5a5a 0 1px,transparent 1px 2px)"></div>
<svg style="position:absolute;left:61px;top:256px" width="16" height="16" viewBox="0 0 16 16"><path d="M0.3 6 L8.2 8.6 L7.4 14.6 L0.3 11.8Z" fill="#efefef"/>
<path d="M0.3 6 L3 7 L3 12.8 L0.3 11.8Z" fill="#dcdcdc"/>
<path d="M8.2 8.6 L14 5.8 L14 11.3 L7.4 14.6Z" fill="#d4d6d9"/>
<path d="M10 9.2 Q10.9 8 11.8 8.4 L11.8 12 L10 12.8Z" fill="#303030"/>
<path d="M7 0.7 L0.4 5.6 L8.3 8.2 L14.1 5.4Z" fill="#e8391c"/>
<path d="M7 0.7 L14.1 5.4 L8.3 8.2Z" fill="#dc2d12"/>
<path d="M7 0.7 L0.4 5.6 L8.3 8.2Z" fill="#f4482a"/>
<path d="M0.4 6.2 L8.3 8.8 L14 6" fill="none" stroke="#c2eef4" stroke-width="0.9"/>
<path d="M0.3 11.8 L7.4 14.6 L14 11.3" fill="none" stroke="#b4b4b4" stroke-width="0.6"/></svg>
<svg style="position:absolute;left:45px;top:276px" width="9" height="9" viewBox="0 0 9 9"><defs><linearGradient id="g16" x1="0" x2="0" y1="0" y2="1"><stop offset="0" stop-color="#ffffff"/><stop offset="0.5" stop-color="#f4f4f4"/><stop offset="1" stop-color="#d4d4d4"/></linearGradient></defs>
<rect x="0.5" y="0.5" width="8" height="8" rx="1.2" fill="url(#g16)" stroke="#8f8f8f"/>
<path d="M2 4.5H7" stroke="#2f469f" stroke-width="1"/><path d="M4.5 2.5V6.5" stroke="#2f469f" stroke-width="1"/></svg>
<div style="position:absolute;left:55px;top:280px;width:6px;height:1px;background:repeating-linear-gradient(90deg,#5a5a5a 0 1px,transparent 1px 2px)"></div>
<svg style="position:absolute;left:61px;top:272px" width="16" height="16" viewBox="0 0 16 16"><path d="M0.3 6 L8.2 8.6 L7.4 14.6 L0.3 11.8Z" fill="#efefef"/>
<path d="M0.3 6 L3 7 L3 12.8 L0.3 11.8Z" fill="#dcdcdc"/>
<path d="M8.2 8.6 L14 5.8 L14 11.3 L7.4 14.6Z" fill="#d4d6d9"/>
<path d="M10 9.2 Q10.9 8 11.8 8.4 L11.8 12 L10 12.8Z" fill="#303030"/>
<path d="M7 0.7 L0.4 5.6 L8.3 8.2 L14.1 5.4Z" fill="#e8391c"/>
<path d="M7 0.7 L14.1 5.4 L8.3 8.2Z" fill="#dc2d12"/>
<path d="M7 0.7 L0.4 5.6 L8.3 8.2Z" fill="#f4482a"/>
<path d="M0.4 6.2 L8.3 8.8 L14 6" fill="none" stroke="#c2eef4" stroke-width="0.9"/>
<path d="M0.3 11.8 L7.4 14.6 L14 11.3" fill="none" stroke="#b4b4b4" stroke-width="0.6"/></svg>
<svg style="position:absolute;left:45px;top:292px" width="9" height="9" viewBox="0 0 9 9"><defs><linearGradient id="g17" x1="0" x2="0" y1="0" y2="1"><stop offset="0" stop-color="#ffffff"/><stop offset="0.5" stop-color="#f4f4f4"/><stop offset="1" stop-color="#d4d4d4"/></linearGradient></defs>
<rect x="0.5" y="0.5" width="8" height="8" rx="1.2" fill="url(#g17)" stroke="#8f8f8f"/>
<path d="M2 4.5H7" stroke="#2f469f" stroke-width="1"/><path d="M4.5 2.5V6.5" stroke="#2f469f" stroke-width="1"/></svg>
<div style="position:absolute;left:55px;top:296px;width:6px;height:1px;background:repeating-linear-gradient(90deg,#5a5a5a 0 1px,transparent 1px 2px)"></div>
<svg style="position:absolute;left:61px;top:288px" width="16" height="16" viewBox="0 0 16 16"><path d="M0.3 6 L8.2 8.6 L7.4 14.6 L0.3 11.8Z" fill="#efefef"/>
<path d="M0.3 6 L3 7 L3 12.8 L0.3 11.8Z" fill="#dcdcdc"/>
<path d="M8.2 8.6 L14 5.8 L14 11.3 L7.4 14.6Z" fill="#d4d6d9"/>
<path d="M10 9.2 Q10.9 8 11.8 8.4 L11.8 12 L10 12.8Z" fill="#303030"/>
<path d="M7 0.7 L0.4 5.6 L8.3 8.2 L14.1 5.4Z" fill="#e8391c"/>
<path d="M7 0.7 L14.1 5.4 L8.3 8.2Z" fill="#dc2d12"/>
<path d="M7 0.7 L0.4 5.6 L8.3 8.2Z" fill="#f4482a"/>
<path d="M0.4 6.2 L8.3 8.8 L14 6" fill="none" stroke="#c2eef4" stroke-width="0.9"/>
<path d="M0.3 11.8 L7.4 14.6 L14 11.3" fill="none" stroke="#b4b4b4" stroke-width="0.6"/></svg>
<div style="position:absolute;left:30px;top:16px;width:1px;height:4px;background:repeating-linear-gradient(180deg,#5a5a5a 0 1px,transparent 1px 2px)"></div>
<div style="position:absolute;left:49px;top:32px;width:1px;height:4px;background:repeating-linear-gradient(180deg,#5a5a5a 0 1px,transparent 1px 2px)"></div>
<div style="position:absolute;left:49px;top:45px;width:1px;height:247px;background:repeating-linear-gradient(180deg,#5a5a5a 0 1px,transparent 1px 2px)"></div>
<div style="position:absolute;left:68px;top:48px;width:1px;height:4px;background:repeating-linear-gradient(180deg,#5a5a5a 0 1px,transparent 1px 2px)"></div>
<div style="position:absolute;left:68px;top:61px;width:1px;height:183px;background:repeating-linear-gradient(180deg,#5a5a5a 0 1px,transparent 1px 2px)"></div>
<div style="position:absolute;left:87px;top:64px;width:1px;height:164px;background:repeating-linear-gradient(180deg,#5a5a5a 0 1px,transparent 1px 2px)"></div>
<div style="position:absolute;left:0px;top:510px;width:244px;height:16px;background:#f0f0f0"></div>
<div style="position:absolute;left:17px;top:510px;width:127px;height:15px;background:#cdcdcd"></div>
<svg style="position:absolute;left:0;top:510px" width="244" height="16" viewBox="0 0 244 16"><path d="M10.6 4.2 L6 7.7 L10.6 11.2 M233.4 4.2 L238 7.7 L233.4 11.2" fill="none" stroke="#4a4a4a" stroke-width="2"/></svg>
<span style="position:absolute;left:43.70px;top:-1.16px;font-size:12px;line-height:16px;transform:scaleX(0.8698);transform-origin:0 0;color:#000;white-space:pre;">Organizational Structure</span>
<span style="position:absolute;left:62.80px;top:14.84px;font-size:12px;line-height:16px;transform:scaleX(0.8843);transform-origin:0 0;color:#000;white-space:pre;">WMS_Demo ( COMP )</span>
<span style="position:absolute;left:177.00px;top:14.84px;font-size:12px;line-height:16px;transform:scaleX(0.8049);transform-origin:0 0;color:#7b7b7b;white-space:pre;word-spacing:1px;">- Empty = 52/56</span>
<span style="position:absolute;left:80.80px;top:30.84px;font-size:12px;line-height:16px;transform:scaleX(0.8970);transform-origin:0 0;color:#000;white-space:pre;">GeneralWarehouse ( 01 )</span>
<span style="position:absolute;left:208.00px;top:30.84px;font-size:12px;line-height:16px;transform:scaleX(0.8049);transform-origin:0 0;color:#7b7b7b;white-space:pre;word-spacing:1px;">- Empty = 20/25</span>
<span style="position:absolute;left:101.00px;top:46.84px;font-size:12px;line-height:16px;transform:scaleX(0.8940);transform-origin:0 0;color:#000;white-space:pre;">Zone for logisticWh01</span>
<span style="position:absolute;left:119.70px;top:62.84px;font-size:12px;line-height:16px;transform:scaleX(0.8957);transform-origin:0 0;color:#000;white-space:pre;">B.0003 ( B.0003 )</span>
<span style="position:absolute;left:119.70px;top:78.84px;font-size:12px;line-height:16px;transform:scaleX(0.8957);transform-origin:0 0;color:#000;white-space:pre;">B.0004 ( B.0004 )</span>
<span style="position:absolute;left:119.70px;top:94.84px;font-size:12px;line-height:16px;transform:scaleX(0.8957);transform-origin:0 0;color:#000;white-space:pre;">B.0009 ( B.0009 )</span>
<span style="position:absolute;left:119.70px;top:110.84px;font-size:12px;line-height:16px;transform:scaleX(0.9025);transform-origin:0 0;color:#000;white-space:pre;">MD_1 ( MD_1 )</span>
<span style="position:absolute;left:119.70px;top:126.84px;font-size:12px;line-height:16px;transform:scaleX(0.9025);transform-origin:0 0;color:#000;white-space:pre;">MD_2 ( MD_2 )</span>
<span style="position:absolute;left:119.70px;top:142.84px;font-size:12px;line-height:16px;transform:scaleX(0.9025);transform-origin:0 0;color:#000;white-space:pre;">MD_3 ( MD_3 )</span>
<span style="position:absolute;left:119.70px;top:158.84px;font-size:12px;line-height:16px;transform:scaleX(0.9013);transform-origin:0 0;color:#000;white-space:pre;">RD_2 ( RD_2 )</span>
<span style="position:absolute;left:120.00px;top:174.84px;font-size:12px;line-height:16px;transform:scaleX(0.8613);transform-origin:0 0;color:#000;white-space:pre;">A4 Printer ( Printer_1 )</span>
<span style="position:absolute;left:119.70px;top:190.84px;font-size:12px;line-height:16px;transform:scaleX(0.9014);transform-origin:0 0;color:#000;white-space:pre;">ST_1 ( ST_1 )</span>
<span style="position:absolute;left:119.70px;top:206.84px;font-size:12px;line-height:16px;transform:scaleX(0.9014);transform-origin:0 0;color:#000;white-space:pre;">ST_2 ( ST_2 )</span>
<span style="position:absolute;left:120.00px;top:222.84px;font-size:12px;line-height:16px;transform:scaleX(0.9039);transform-origin:0 0;color:#000;white-space:pre;">ZN_1 ( ZN_1 )</span>
<span style="position:absolute;left:196.40px;top:222.84px;font-size:12px;line-height:16px;transform:scaleX(0.8049);transform-origin:0 0;color:#7b7b7b;white-space:pre;word-spacing:1px;">- Empty = 3/3</span>
<span style="position:absolute;left:101.00px;top:238.84px;font-size:12px;line-height:16px;transform:scaleX(0.8803);transform-origin:0 0;color:#000;white-space:pre;">Zone for sale ( Zsale )</span>
<span style="position:absolute;left:211.40px;top:238.84px;font-size:12px;line-height:16px;transform:scaleX(0.8049);transform-origin:0 0;color:#7b7b7b;white-space:pre;word-spacing:1px;">- Empty = 5/5</span>
<span style="position:absolute;left:81.60px;top:254.84px;font-size:12px;line-height:16px;transform:scaleX(0.9046);transform-origin:0 0;color:#000;white-space:pre;">SecondWarehouse ( 02 )</span>
<span style="position:absolute;left:209.00px;top:254.84px;font-size:12px;line-height:16px;transform:scaleX(0.8049);transform-origin:0 0;color:#7b7b7b;white-space:pre;word-spacing:1px;">- Empty = 8/8</span>
<span style="position:absolute;left:82.00px;top:270.84px;font-size:12px;line-height:16px;transform:scaleX(0.8908);transform-origin:0 0;color:#000;white-space:pre;">ThirdWarehouse ( 03 )</span>
<span style="position:absolute;left:195.60px;top:270.84px;font-size:12px;line-height:16px;transform:scaleX(0.8049);transform-origin:0 0;color:#7b7b7b;white-space:pre;word-spacing:1px;">- Empty = 0/0</span>
<span style="position:absolute;left:82.00px;top:286.84px;font-size:12px;line-height:16px;transform:scaleX(0.8880);transform-origin:0 0;color:#000;white-space:pre;">06 External Receipt WHS ( 06 )</span>
<span style="position:absolute;left:238.00px;top:286.84px;font-size:12px;line-height:16px;transform:scaleX(0.8049);transform-origin:0 0;color:#7b7b7b;white-space:pre;word-spacing:1px;">- Empty</span>
<span style="position:absolute;left:208.14px;top:46.84px;font-size:12px;line-height:16px;transform:scaleX(0.8600);transform-origin:0 0;color:#000;white-space:pre;">( ZlogisticWh01 )</span>
</div>
<div style="position:absolute;left:89px;top:111px;width:132px;height:19px;box-sizing:border-box;border:2px solid #fb1c20"></div>
<span class="u" style="position:absolute;left:13.30px;top:8.84px;font-size:12px;line-height:16px;transform:scaleX(0.9963);transform-origin:0 0;color:#000;white-space:pre;">Organizational Structure - Produmex WMS Add-On</span>
<span class="u" style="position:absolute;left:201.75px;top:41.84px;font-size:12px;line-height:16px;transform:scaleX(0.9528);transform-origin:0 0;color:#222;white-space:pre;">Search</span>
<span style="position:absolute;left:273.80px;top:46.84px;font-size:12px;line-height:16px;transform:scaleX(0.9000);transform-origin:0 0;color:#000;white-space:pre;">Code</span>
<span style="position:absolute;left:274.53px;top:67.84px;font-size:12px;line-height:16px;transform:scaleX(0.8677);transform-origin:0 0;color:#000;white-space:pre;">Name</span>
<span style="position:absolute;left:417.20px;top:46.14px;font-size:12px;line-height:16px;transform:scaleX(0.8813);transform-origin:0 0;color:#000;white-space:pre;">ZlogisticWh01</span>
<span style="position:absolute;left:417.00px;top:67.14px;font-size:12px;line-height:16px;transform:scaleX(0.8905);transform-origin:0 0;color:#000;white-space:pre;">Zone for logisticWh01</span>
<span style="position:absolute;left:272.77px;top:99.84px;font-size:12px;line-height:16px;transform:scaleX(0.9341);transform-origin:0 0;color:#000;white-space:pre;">General</span>
<span style="position:absolute;left:323.00px;top:99.84px;font-size:12px;line-height:16px;transform:scaleX(0.9200);transform-origin:0 0;color:#000;white-space:pre;">Attributes</span>
<span style="position:absolute;left:301.00px;top:123.84px;font-size:12px;line-height:16px;transform:scaleX(0.8724);transform-origin:0 0;color:#000;white-space:pre;">Attribute Code</span>
<span style="position:absolute;left:495.00px;top:123.84px;font-size:12px;line-height:16px;transform:scaleX(0.8756);transform-origin:0 0;color:#000;white-space:pre;">Attribute Value</span>
<span style="position:absolute;left:689.61px;top:123.84px;font-size:12px;line-height:16px;transform:scaleX(0.8901);transform-origin:0 0;color:#000;white-space:pre;">Is Inherited Value</span>
<span style="position:absolute;left:297.50px;top:143.84px;font-size:12px;line-height:16px;transform:scaleX(0.9571);transform-origin:0 0;color:#000;white-space:pre;">ATT2</span>
<span style="position:absolute;left:491.00px;top:143.84px;font-size:12px;line-height:16px;transform:scaleX(0.8571);transform-origin:0 0;color:#000;white-space:pre;">V1</span>
<span style="position:absolute;left:685.66px;top:143.84px;font-size:12px;line-height:16px;transform:scaleX(0.8393);transform-origin:0 0;color:#000;white-space:pre;">False</span>
<span style="position:absolute;left:297.50px;top:163.84px;font-size:12px;line-height:16px;transform:scaleX(0.9107);transform-origin:0 0;color:#000;white-space:pre;">ATT1</span>
<span style="position:absolute;left:685.66px;top:163.84px;font-size:12px;line-height:16px;transform:scaleX(0.8393);transform-origin:0 0;color:#000;white-space:pre;">False</span>
<span style="position:absolute;left:283.30px;top:484.84px;font-size:12px;line-height:16px;transform:scaleX(0.8711);transform-origin:0 0;color:#000;white-space:pre;">Attribute Code</span>
<span style="position:absolute;left:283.30px;top:524.84px;font-size:12px;line-height:16px;transform:scaleX(0.8744);transform-origin:0 0;color:#000;white-space:pre;">Attribute Value</span>
<span style="position:absolute;left:398.30px;top:485.84px;font-size:12px;line-height:16px;transform:scaleX(0.9643);transform-origin:0 0;color:#000;white-space:pre;">ATT4</span>
<span class="u" style="position:absolute;left:829.50px;top:484.02px;font-size:11.5px;line-height:16px;transform:scaleX(1.0500);transform-origin:0 0;color:#8b8b98;white-space:pre;">Add</span>
<span class="u" style="position:absolute;left:821.49px;top:504.84px;font-size:12px;line-height:16px;transform:scaleX(1.0054);transform-origin:0 0;color:#222;white-space:pre;">Update</span>
<span class="u" style="position:absolute;left:823.30px;top:525.84px;font-size:12px;line-height:16px;transform:scaleX(0.9970);transform-origin:0 0;color:#222;white-space:pre;">Delete</span>
<span class="u" style="position:absolute;left:303.50px;top:564.02px;font-size:11.5px;line-height:16px;transform:scaleX(0.8667);transform-origin:0 0;color:#8b8b98;white-space:pre;">Ok</span>
<span class="u" style="position:absolute;left:374.56px;top:564.02px;font-size:11.5px;line-height:16px;transform:scaleX(0.9412);transform-origin:0 0;color:#8b8b98;white-space:pre;">Cancel</span>
<span class="u" style="position:absolute;left:836.41px;top:603.84px;font-size:12px;line-height:16px;transform:scaleX(0.9897);transform-origin:0 0;color:#222;white-space:pre;">Close</span>
<div style="position:absolute;left:395px;top:504px;width:376px;height:67px;box-sizing:border-box;border:1px solid #9a9a9a;background:#f0e68c;box-shadow:2px 2px 2px rgba(0,0,0,0.55)"></div>
<div style="position:absolute;left:396px;top:505px;width:374px;height:13px;box-sizing:border-box;background:#0078d7;border:1px dotted #f0a050"></div>
<span style="position:absolute;left:398.30px;top:503.84px;font-size:12px;line-height:16px;transform:scaleX(0.9643);transform-origin:0 0;color:#fff;white-space:pre;">ATT4</span>
<span style="position:absolute;left:398.30px;top:516.84px;font-size:12px;line-height:16px;transform:scaleX(0.9643);transform-origin:0 0;color:#000;white-space:pre;">ATT2</span>
<span style="position:absolute;left:398.30px;top:529.84px;font-size:12px;line-height:16px;transform:scaleX(0.9643);transform-origin:0 0;color:#000;white-space:pre;">ATT3</span>
<span style="position:absolute;left:398.30px;top:542.84px;font-size:12px;line-height:16px;transform:scaleX(0.9643);transform-origin:0 0;color:#000;white-space:pre;">ATT5</span>
<span style="position:absolute;left:398.30px;top:555.84px;font-size:12px;line-height:16px;transform:scaleX(0.9179);transform-origin:0 0;color:#000;white-space:pre;">ATT1</span>
</body></html>
